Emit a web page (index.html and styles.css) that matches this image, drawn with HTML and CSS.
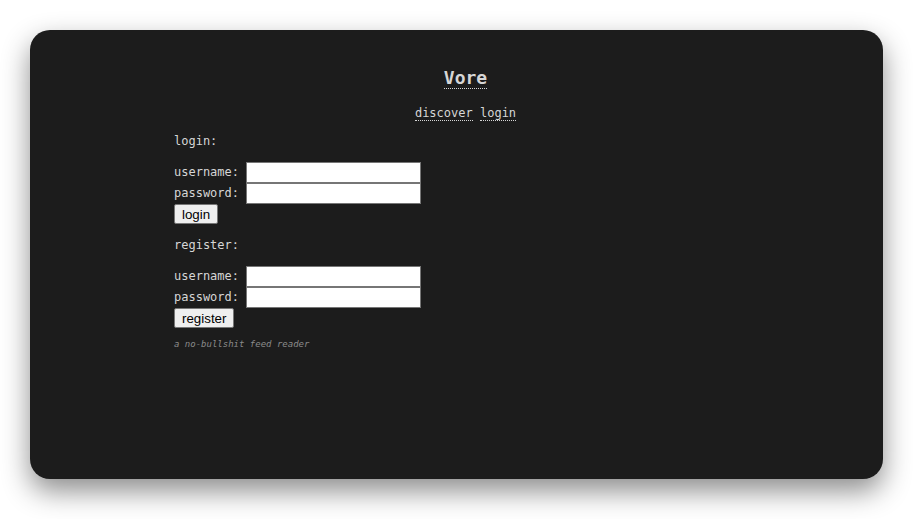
FILE: index.html
```html
<!DOCTYPE html>
<html>
<head>
<meta charset="utf-8">
<link rel="stylesheet" href="styles.css">
</head>
<body>
<div class="window">
  <div class="page">
    <h1 class="title"><a href="#">Vore</a></h1>
    <nav class="nav"><a href="#">discover</a> <a href="#">login</a></nav>
    <p class="section first">login:</p>
    <form class="form">
      <div class="row">username: <input type="text"></div>
      <div class="row">password: <input type="password"></div>
      <div class="row"><button type="button">login</button></div>
    </form>
    <p class="section">register:</p>
    <form class="form">
      <div class="row">username: <input type="text"></div>
      <div class="row">password: <input type="password"></div>
      <div class="row"><button type="button">register</button></div>
    </form>
    <p class="tagline">a no-bullshit feed reader</p>
  </div>
</div>
</body>
</html>
```
FILE: styles.css
```css
html, body {
  margin: 0;
  padding: 0;
  background: #ffffff;
}
body {
  padding: 30px;
  height: 519px;
  box-sizing: border-box;
}
.window {
  width: 853px;
  height: 449px;
  background: #1c1c1c;
  border-radius: 20px;
  box-shadow: 0 12px 28px rgba(0, 0, 0, 0.45);
  box-sizing: border-box;
  padding: 36px 0 0 144px;
  color: #d6d6d6;
  font-family: "DejaVu Sans Mono", monospace;
  font-size: 12px;
}
.page {
  width: 583px;
}
.title {
  margin: 0 0 14px;
  text-align: center;
  font-size: 18px;
  font-weight: bold;
  line-height: 24px;
}
.page a {
  color: #d6d6d6;
  text-decoration: none;
  border-bottom: 1px dotted #d6d6d6;
}
.nav {
  text-align: center;
  line-height: 18px;
}
.section {
  margin: 12px 0 13px;
  line-height: 16px;
}
.section.first {
  margin-top: 11px;
}
.form {
  margin: 0;
}
.row {
  line-height: 21px;
  height: 21px;
}
.row input {
  width: 175px;
  height: 21px;
  box-sizing: border-box;
  margin: 0;
  vertical-align: top;
  border: 1px solid #767676;
  background: #fff;
  padding: 1px 2px;
}
.row button {
  margin: 0;
  vertical-align: top;
  font-family: "Liberation Sans", Arial, sans-serif;
  font-size: 13.33px;
  height: 20px;
  padding: 0 7px;
  background: #efefef;
  border: 1px solid #767676;
  border-radius: 2px;
  color: #000;
}
.tagline {
  margin: 10px 0 0;
  font-style: italic;
  font-size: 9px;
  color: #8a8a8a;
}
```
